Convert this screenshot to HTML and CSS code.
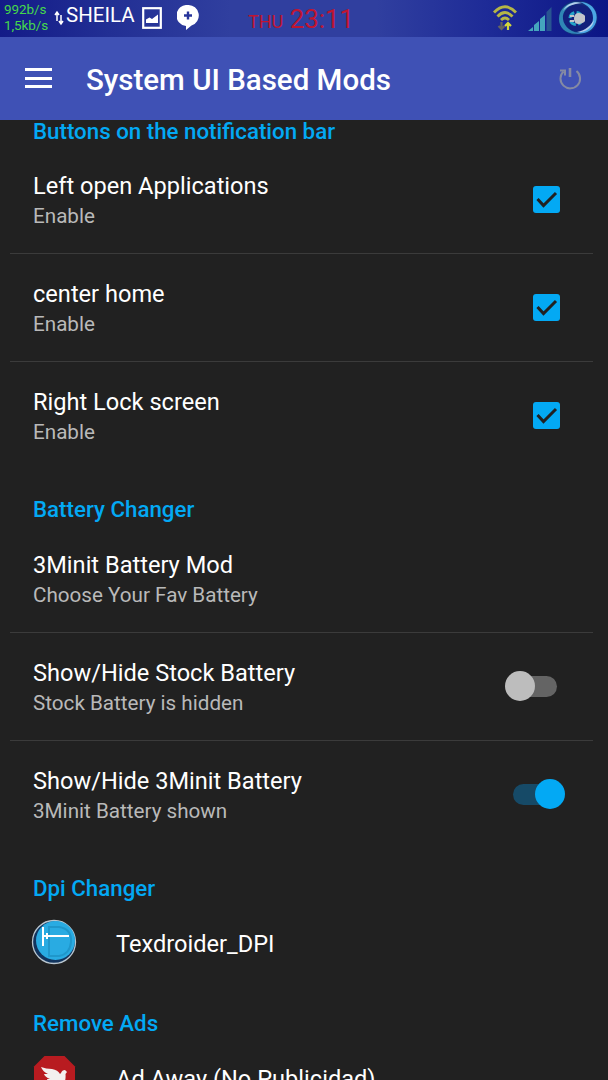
FILE: index.html
```html
<!DOCTYPE html>
<html lang="en">
<head>
  <meta charset="UTF-8" />
  <meta name="viewport" content="width=device-width, initial-scale=1.0" />
  <title>System UI Based Mods</title>
  <link rel="stylesheet" href="styles.css">
</head>
<body>
  <div class="statusbar">
    <div class="speed"><span>992b/s</span><span>1,5kb/s</span></div>
    <svg class="updown" width="10" height="16" viewBox="0 0 10 16">
      <path d="M3 11V3M1 5L3 2L5 5M7 5v9M5 11l2 3l2-3" fill="none" stroke="#fff" stroke-width="1.500"/>
    </svg>
    <span class="carrier">SHEILA</span>
    <svg class="picture" width="20" height="22" viewBox="0 0 20 22">
      <rect x="1.200" y="1.200" width="17.600" height="19.600" fill="none" stroke="#fff" stroke-width="2.200"/>
      <path d="M4 16v-3.500l3.500-2 2.500 1.500L16 7.500V16z" fill="#fff"/>
    </svg>
    <svg class="bubble" width="22" height="25" viewBox="0 0 22 25">
      <path d="M11 0a10.500 10.500 0 0 1 3.500 20.500L9 25v-4A10.500 10.500 0 0 1 11 0z" fill="#fff"/>
      <path d="M11 6.500v8M7 10.500h8" stroke="#26349a" stroke-width="2.400"/>
    </svg>
    <div class="clock"><small>THU</small> 23:11</div>
    <svg class="wifi" width="26" height="27" viewBox="0 0 26 27">
      <g fill="none" stroke="#b5b647" stroke-width="2.800">
        <path d="M2 7.500Q13-4 24 7.500"/>
        <path d="M5.500 11.500Q13 3.500 20.500 11.500"/>
        <path d="M9 15Q13 11 17 15"/>
      </g>
      <path d="M9.500 17v7M6.500 21l3 3 3-3" fill="none" stroke="#66665f" stroke-width="2.200"/>
      <path d="M16 25v-7M13 21l3-3 3 3" fill="none" stroke="#d2d83c" stroke-width="2.200"/>
    </svg>
    <svg class="signal" width="24" height="24" viewBox="0 0 24 24">
      <path d="M0 24l5-4v4zM6 18l5-4v10H6zM12 12l5-4v16h-5z" fill="#45a5bd"/>
      <path d="M18.500 5l5-5v24h-5z" fill="#285591"/>
    </svg>
    <svg class="battery" width="40" height="36" viewBox="0 0 40 36">
      <ellipse cx="20" cy="18" rx="17.500" ry="15.500" fill="#12207c" stroke="#14307c" stroke-width="4"/>
      <path d="M1 19C1 8 10 1 22 2C10 5 4 11 5 19C6 27 14 33 23 33C10 36 1 29 1 19z" fill="#2f86b5"/>
      <path d="M22 2C34 2 41 12 38 22C35 31 27 35 17 33C28 32 35 26 35 18C35 10 30 5 22 2z" fill="#4ba6e4"/>
      <path d="M5 11C9 3 17 1 24 3C15 4 9 6 5 11zM36 20C35 28 27 33 19 32C28 30 32 26 36 20z" fill="#b4cdec"/>
      <circle cx="18" cy="18.500" r="6" fill="none" stroke="#26a5c9" stroke-width="3" stroke-dasharray="7 2.400"/>
      <path d="M16 18.500q0-5.500 5-5.500q5 1 6 3v5q-1 2-6 3q-5 0-5-5.500z" fill="#c3c5ca"/>
      <path d="M12 16h4M12 21h4" stroke="#c3c5ca" stroke-width="1.800"/>
    </svg>
  </div>

  <header class="toolbar">
    <div class="menu"><i></i><i></i><i></i></div>
    <h1>System UI Based Mods</h1>
    <svg class="power" width="24" height="24" viewBox="0 0 24 24">
      <path d="M5.500 4.500a9.800 9.800 0 1 0 13-.500" fill="none" stroke="#858aa3" stroke-width="2"/>
      <path d="M12 1v9" stroke="#858aa3" stroke-width="2.600"/>
      <path d="M2 3.500h5v5" fill="none" stroke="#858aa3" stroke-width="2"/>
    </svg>
  </header>

  <main>
    <div class="list">
      <h2>Buttons on the notification bar</h2>
      <div class="row">
        <div class="text"><h3>Left open Applications</h3><p>Enable</p></div>
        <div class="check"><svg viewBox="0 0 27 27"><path d="M4.500 13l6 6.500L23 7" /></svg></div>
      </div>
      <div class="row">
        <div class="text"><h3>center home</h3><p>Enable</p></div>
        <div class="check"><svg viewBox="0 0 27 27"><path d="M4.500 13l6 6.500L23 7" /></svg></div>
      </div>
      <div class="row last">
        <div class="text"><h3>Right Lock screen</h3><p>Enable</p></div>
        <div class="check"><svg viewBox="0 0 27 27"><path d="M4.500 13l6 6.500L23 7" /></svg></div>
      </div>

      <h2 class="spaced">Battery Changer</h2>
      <div class="row">
        <div class="text"><h3>3Minit Battery Mod</h3><p>Choose Your Fav Battery</p></div>
      </div>
      <div class="row">
        <div class="text"><h3>Show/Hide Stock Battery</h3><p>Stock Battery is hidden</p></div>
        <div class="switch"></div>
      </div>
      <div class="row last">
        <div class="text"><h3>Show/Hide 3Minit Battery</h3><p>3Minit Battery shown</p></div>
        <div class="switch on"></div>
      </div>

      <h2>Dpi Changer</h2>
      <div class="app">
        <svg width="46" height="46" viewBox="0 0 46 46">
          <circle cx="23" cy="23" r="21.500" fill="#11345e" stroke="#b9c6cf" stroke-width="1.300"/>
          <circle cx="24.500" cy="21.500" r="19.500" fill="#29abe2"/>
          <path d="M18 8h10q13 2 12 15q-1 12-12 14H18z" fill="none" stroke="#1f97cb" stroke-width="2"/>
          <path d="M12 8v19M12 17H38M16 14v6" fill="none" stroke="#fff" stroke-width="2"/>
        </svg>
        <h3>Texdroider_DPI</h3>
      </div>

      <h2>Remove Ads</h2>
      <div class="app">
        <svg width="46" height="46" viewBox="0 0 46 46">
          <path d="M13.500 2h20L44 12.500v20L33.500 43h-20L3 32.500v-20z" fill="#b81b20"/>
          <path d="M10 13q5 2 11 2q6 1 8 5l1-1q1-3 4-3l2 2-1.500 2q1 12-8.500 16l-4 5-7-6 6-4q-4-2-5-6l3 0q-5-2-6-5l4 0q-5-2-7-7z" fill="#f3f0ef"/>
        </svg>
        <h3>Ad Away (No Publicidad)</h3>
      </div>
    </div>
  </main>
</body>
</html>
```
FILE: styles.css
```css
:root {
  --primary: #3f51b5;
  --accent: #03a9f4;
  --bg: #212121;
  --line: #3b3b3b;
}

* {
  box-sizing: border-box;
}

body {
  margin: 0;
  height: 1080px;
  overflow: hidden;
  display: flex;
  flex-direction: column;
  background: var(--bg);
  color: #fff;
  font-family: Roboto, sans-serif;
}

h1, h2, h3, p {
  margin: 0;
  font-weight: 400;
  white-space: nowrap;
}

svg {
  display: block;
  flex: none;
}

/* Status bar */
.statusbar {
  flex: none;
  height: 37px;
  display: flex;
  align-items: flex-start;
  background: linear-gradient(90deg, #131b88 0%, #222f94 18%, #303f9f 38%, #303f9f 62%, #1e2b97 80%, #0b1585 100%);
}

.speed {
  width: 50px;
  padding: 1px 0 0 4px;
  display: flex;
  flex-direction: column;
  font-size: 13.5px;
  line-height: 16px;
  letter-spacing: -0.1px;
  color: #45d84b;
}

.updown {
  margin: 10px 0 0 4px;
}

.carrier {
  width: 76px;
  margin-left: 2px;
  font-size: 20.5px;
  line-height: 31px;
}

.picture {
  margin-top: 7px;
}

.bubble {
  margin: 5px 0 0 15px;
}

.clock {
  width: 244px;
  margin-left: 49px;
  font-size: 25.8px;
  line-height: 39px;
  color: #c01531;
}

.clock small {
  font-size: 18px;
}

.wifi {
  margin-top: 5px;
}

.signal {
  margin: 7px 0 0 10px;
}

.battery {
  margin-left: 6px;
}

/* Toolbar */
.toolbar {
  flex: none;
  height: 83px;
  padding: 0 26px 0 25px;
  display: flex;
  align-items: center;
  background: var(--primary);
}

.menu {
  width: 27px;
  height: 20px;
  margin-bottom: 1px;
  display: flex;
  flex-direction: column;
  justify-content: space-between;
}

.menu i {
  height: 3px;
  background: #fff;
}

.toolbar h1 {
  flex: 1;
  margin-left: 34px;
  padding-top: 2px;
  font-size: 29.5px;
  font-weight: 500;
}

/* Preference list */
main {
  flex: 1;
  min-height: 0;
  overflow: hidden;
}

.list {
  margin-top: -28px;
}

.list h2 {
  height: 54px;
  padding: 25px 33px 0;
  font-size: 22.3px;
  line-height: 28px;
  font-weight: 500;
  color: var(--accent);
}

.list h2.spaced {
  height: 55px;
}

.row {
  height: 108px;
  margin: 0 15px 0 10px;
  padding: 0 33px 0 23px;
  display: flex;
  justify-content: space-between;
  align-items: center;
  border-bottom: 1px solid var(--line);
}

.row.last {
  border-bottom-color: transparent;
}

.row h3,
.app h3 {
  font-size: 23.6px;
  line-height: 32px;
}

.row .text {
  padding-top: 1px;
}

.row p {
  font-size: 20.65px;
  line-height: 28px;
  color: #b9b9b9;
}

.check {
  width: 27px;
  height: 27px;
  border-radius: 3px;
  background: var(--accent);
}

.check path {
  fill: none;
  stroke: var(--bg);
  stroke-width: 3;
}

/* The thumb reaches past the round end of the track */
.switch {
  width: 44px;
  height: 21px;
  margin: 0 3px 1px 0;
  display: flex;
  align-items: center;
  border-radius: 11px;
  background: #646464;
}

.switch::before {
  content: "";
  flex: none;
  width: 30px;
  height: 30px;
  margin-left: -8px;
  border-radius: 50%;
  background: #bdbdbd;
}

.switch.on {
  background: #164a67;
}

.switch.on::before {
  margin-left: 22px;
  background: var(--accent);
}

.app {
  height: 81px;
  padding-left: 31px;
  display: flex;
  align-items: center;
  gap: 39px;
}

.app svg {
  margin-bottom: 3px;
}
```
